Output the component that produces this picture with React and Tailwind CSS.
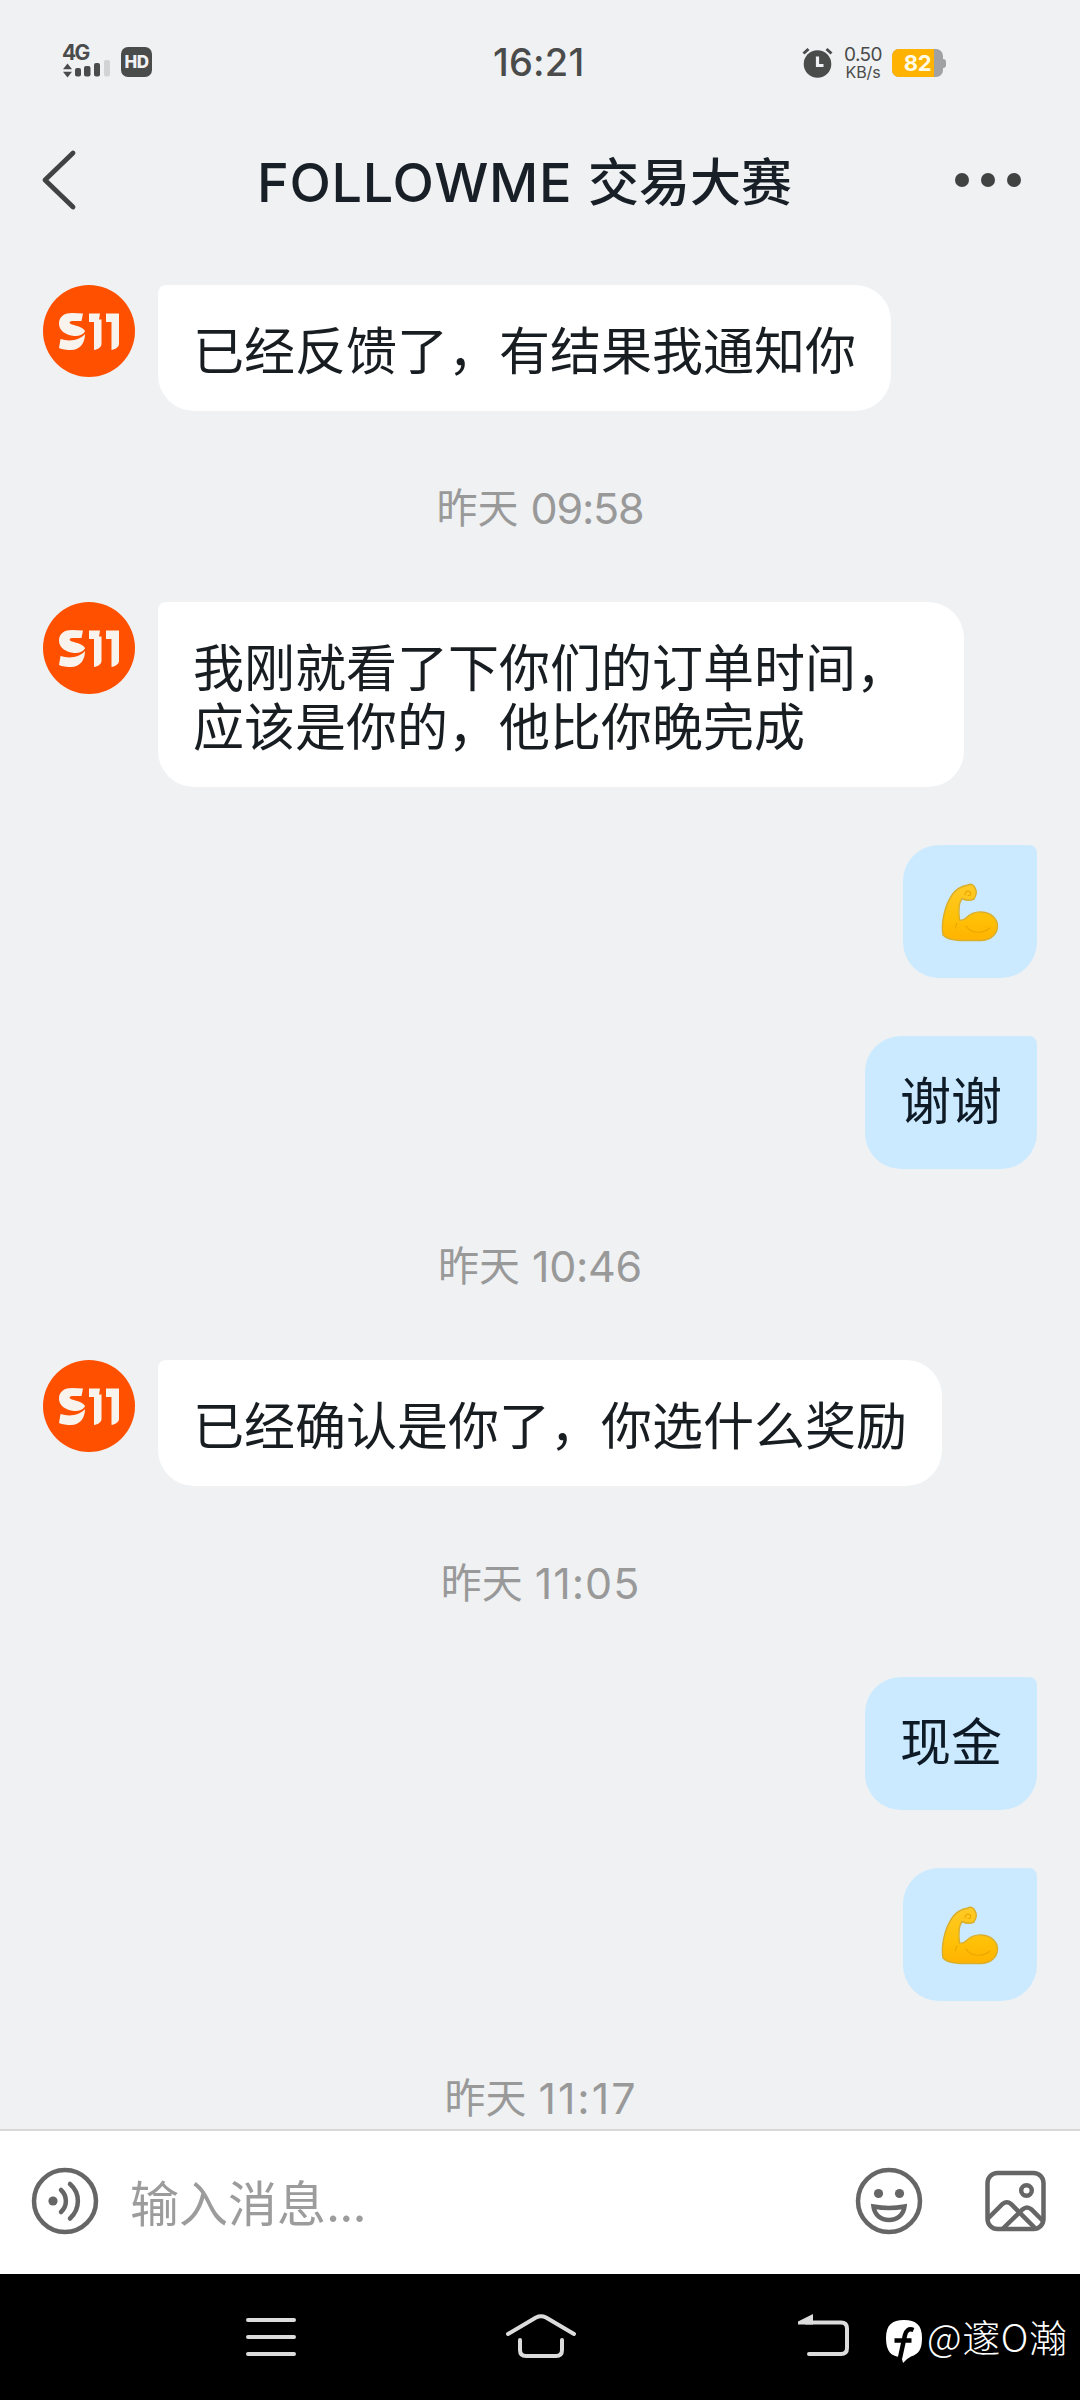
const messages = [
    { type: 'in', lines: ['已经反馈了，有结果我通知你'] },
    { type: 'time', day: '昨天', time: '09:58', spacing: 'tracking-[-1.2px]' },
    { type: 'in', lines: ['我刚就看了下你们的订单时间，', '应该是你的，他比你晚完成'] },
    { type: 'gap' },
    { type: 'emoji' },
    { type: 'gap' },
    { type: 'out', text: '谢谢' },
    { type: 'time', day: '昨天', time: '10:46', spacing: 'tracking-[-0.3px]' },
    { type: 'in', lines: ['已经确认是你了，你选什么奖励'] },
    { type: 'time', day: '昨天', time: '11:05', spacing: 'tracking-[1px] -mr-px' },
    { type: 'out', text: '现金' },
    { type: 'gap' },
    { type: 'emoji' },
    { type: 'time', day: '昨天', time: '11:17', spacing: 'tracking-[2px] -mr-0.5' }
];

function StatusBar() {
    return (
        <div className="h-[124px] flex items-start relative text-[#4a4b4b]">
            {/* Signal */}
            <div className="ml-[62px] mt-[43px] w-12">
                <div className="text-[21px] leading-[20px] h-[19px] font-bold tracking-[-1.8px]">4G</div>
                <svg className="block overflow-visible" width="48" height="16" viewBox="0 0 48 16" fill="currentColor">
                    <path d="M1 7.3L5.5 1.5L10 7.3ZM1 9.8L5.5 15.5L10 9.8Z" />
                    <rect x="13" y="6" width="6" height="8.500" rx="2" />
                    <rect x="22" y="4" width="6.500" height="10.500" rx="2" />
                    <rect x="32" y="1" width="6" height="13.500" rx="2" />
                    <rect x="42" y="-2" width="6" height="16.500" rx="2" fill="#d2d3d4" />
                </svg>
            </div>
            <div className="ml-[11px] mt-[47px] w-[31px] h-[30px] rounded-[7px] bg-[#4a4b4b] text-[#eff1f3] text-[17px] leading-[30px] font-extrabold text-center tracking-[-0.5px]">HD</div>

            <div className="ml-[341px] mt-[40px] text-[38px] leading-[44px] font-medium tracking-[0.2px] w-[110px]">16:21</div>

            {/* Alarm, speed, battery */}
            <svg className="ml-[199px] mt-[47px]" width="31" height="31" viewBox="0 0 31 31" fill="none">
                <circle cx="15.500" cy="17" r="13.800" fill="currentColor" />
                <path d="M1.500 6.500L6.500 2M29.500 6.500L24.500 2" stroke="currentColor" strokeWidth="3" />
                <path d="M15.500 9.500V18.500H21.500" stroke="#eff1f3" strokeWidth="3.200" />
            </svg>
            <div className="ml-[9px] mt-[45px] w-[42px] text-center">
                <div className="text-[19px] leading-[19px] tracking-[-0.6px]">0.50</div>
                <div className="text-[16px] leading-[16px] tracking-[-0.1px]">KB/s</div>
            </div>
            <div className="ml-[8px] mt-[49px] flex items-center">
                <div className="w-[51px] h-[28px] rounded-[7px] bg-[#a0a1a3] overflow-hidden">
                    <div className="w-[42px] h-full bg-[#ffb300] text-[#fffbe6] text-[22px] leading-[29px] font-bold text-right pr-[3px] tracking-[-0.5px]">82</div>
                </div>
                <div className="w-[3px] h-[9px] rounded-r-[3px] bg-[#a0a1a3]" />
            </div>
        </div>
    );
}

function Header() {
    return (
        <div className="h-[161px] flex items-start text-[#181f26]">
            <svg className="ml-[40px] mt-[25px]" width="38" height="62" viewBox="0 0 38 62" fill="none">
                <path d="M33 4L5 31L33 58" stroke="#414242" strokeWidth="4.800" strokeLinecap="round" strokeLinejoin="round" />
            </svg>
            <div className="flex-1 ml-[179px] mt-[26px] text-[54px] leading-[66px] font-medium whitespace-nowrap flex">
                <span className="w-[316px] tracking-[0.7px]">FOLLOWME</span>
                <span className="ml-[15px] text-[51px]">交易大赛</span>
            </div>
            <div className="flex gap-3 mt-[49px] mr-[59px]">
                <span className="w-[14px] h-[14px] rounded-full bg-[#414242]" />
                <span className="w-[14px] h-[14px] rounded-full bg-[#414242]" />
                <span className="w-[14px] h-[14px] rounded-full bg-[#414242]" />
            </div>
        </div>
    );
}

function Avatar() {
    return (
        <svg className="ml-[43px] mr-[23px] flex-none" width="92" height="92" viewBox="0 0 92 92">
            <circle cx="46" cy="46" r="46" fill="#ff5000" />
            <g fill="#f9f3ee">
                <path d="M40 28.500L38.500 36H30C26 36 25.500 38.500 29 39.500C34 41 41 42.500 42 46.500C39 50.500 35 51.500 31 51C23 50 16 46 16 38.500C16 31 22 28 29 28Z" />
                <path d="M17.500 54C27 57 37 55 42 49C42 58 37 65 28 65C24 65 19 64.500 16 63Z" />
                <path d="M46 28.500H57L56 34.500H58.500V59C58.500 62 55 64.500 51 65V37H46Z" />
                <path d="M63 28.500H76V59C76 62 72 64.500 68.500 65V37H63Z" />
            </g>
        </svg>
    );
}

function Muscle() {
    return (
        <svg width="60" height="60" viewBox="0 0 60 60" fill="none">
            <defs>
                <linearGradient id="skin" x1="0" y1="0" x2="0" y2="1">
                    <stop offset="0" stopColor="#ffca28" />
                    <stop offset="0.600" stopColor="#ffc107" />
                    <stop offset="1" stopColor="#ffb300" />
                </linearGradient>
            </defs>
            <path d="M28 3C31 1.500 34 2.500 35 6C37 9 36.500 13 34 17C30 19 25 18 22 16.500C18 22 18.500 30 19.500 38C22 38.500 24 38 26 36C30 32 36 29.500 42 30C51 30.500 57.500 37 57.500 44C57.500 52 51 58 42 58.500H20C12 58 6 56.500 3 53C1 42 4 25 12 13C16 7 22 4 28 3Z" fill="url(#skin)" stroke="#d9ae2c" strokeWidth="1.400" />
            <path d="M25 13C25 10 27 8.500 29.500 9.500C31.500 10.500 31 14 28 13.500M17 41C16 43 15.500 44.500 15.500 46M26 44C31 52 43 52 50 46" stroke="#eda600" strokeWidth="1.100" strokeLinecap="round" />
        </svg>
    );
}

function Message({ item }) {
    if (item.type === 'gap') return <div className="h-[58px]" />;

    if (item.type === 'time') {
        return (
            <div className="h-[191px] pt-[3px] flex items-center justify-center text-[#999]  whitespace-nowrap">
                <span className="text-[41px] leading-[60px]">{item.day}</span>
                <span className={`ml-3 text-[43px] leading-[60px] ${item.spacing}`}>{item.time}</span>
            </div>
        );
    }

    if (item.type === 'in') {
        return (
            <div className="flex items-start">
                <Avatar />
                <div className={`px-[35px] pt-[37px] pb-[30px] bg-white rounded-[36px] rounded-tl-[8px] ${item.lines.length > 1 ? 'w-[806px]' : ''}`}>
                    {item.lines.map(line => (
                        <p key={line} className="text-[51px] leading-[59px] whitespace-nowrap text-[#181d22]">{line}</p>
                    ))}
                </div>
            </div>
        );
    }

    return (
        <div className="flex justify-end pr-[43px]">
            <div className="h-[133px] px-[35px] flex items-center bg-[#cbeaff] rounded-[36px] rounded-tr-[8px]">
                {item.type === 'emoji' ? (
                    <div className="w-[64px] flex justify-center"><Muscle /></div>
                ) : (
                    <p className="text-[51px] leading-[59px] pb-[2px] text-[#0e1a26]">{item.text}</p>
                )}
            </div>
        </div>
    );
}

function InputBar() {
    return (
        <div className="h-[145px] flex-none flex items-center bg-white border-t-2 border-[#d8d8d9] text-[#666]">
            <svg className="ml-[31px] mb-1" width="68" height="68" viewBox="0 0 68 68" fill="none" stroke="currentColor" strokeWidth="4.500" strokeLinecap="round">
                <circle cx="34" cy="34" r="31" />
                <circle cx="22" cy="34" r="4.600" fill="currentColor" stroke="none" />
                <path d="M30 23C36.500 29 36.500 39 30 45" />
                <path d="M39 17C49.500 26 49.500 42 39 51.500" />
            </svg>
            <div className="ml-[31px] pt-[5px] flex-1 text-[49px] leading-[60px] text-[#9c9c9c]">
                输入消息<span className="tracking-[-0.9px]">...</span>
            </div>
            <svg className="mr-[62px] mb-1" width="68" height="68" viewBox="0 0 68 68" fill="none" stroke="currentColor" strokeWidth="4.500">
                <circle cx="34" cy="34" r="31" />
                <circle cx="23.500" cy="26.500" r="4.600" fill="currentColor" stroke="none" />
                <circle cx="44.500" cy="26.500" r="4.600" fill="currentColor" stroke="none" />
                <path d="M18.500 39.500Q34 42.500 49.500 39.500C48.500 48 42 53 34 53C26 53 19.500 48 18.500 39.500Z" />
            </svg>
            <svg className="mr-[33px] mb-1" width="62" height="62" viewBox="0 0 62 62" fill="none" stroke="currentColor" strokeWidth="4.500">
                <rect x="2.500" y="3" width="56" height="56" rx="10" />
                <circle cx="41.500" cy="20.500" r="5.300" />
                <path d="M3 48.500L17.500 34Q22 30.500 26 34L50 58" />
                <path d="M18 58.500L37.500 39.500Q42 35.500 46.500 39.500L58 51" />
            </svg>
        </div>
    );
}

function NavBar() {
    return (
        <div className="relative h-[126px] flex-none flex items-start bg-black text-[#dcdcdc]">
            <svg className="ml-[244px] mt-[42px]" width="54" height="42" viewBox="0 0 54 42" fill="none" stroke="currentColor" strokeWidth="4" strokeLinecap="round">
                <path d="M4 4H50M4 21H50M4 38H50" />
            </svg>
            <svg className="ml-[206px] mt-[38px]" width="74" height="50" viewBox="0 0 74 50" fill="none" stroke="currentColor" strokeWidth="4" strokeLinecap="round" strokeLinejoin="round">
                <path d="M4 22L32 5.500Q37 3 42 5.500L70 22" />
                <path d="M16 28V38Q16 44 22 44H52Q58 44 58 38V28" />
            </svg>
            <svg className="ml-[218px] mt-[38px]" width="56" height="50" viewBox="0 0 56 50" fill="none" stroke="currentColor" strokeWidth="4" strokeLinecap="round">
                <path d="M10 10.500H45Q51 10.500 51 16.500V36Q51 42 45 42H13" />
                <path d="M2 9.500L17 2V12.500H2Z" fill="currentColor" stroke="none" />
            </svg>
            {/* Author mark */}
            <div className="absolute left-[885px] top-[41px] flex items-start text-white">
                <svg width="38" height="50" viewBox="0 0 38 50">
                    <path d="M19 5C31 5 37 10 37 23C37 34 34 39 26 41.500Q21 44 18 48L16.500 42C6 42 1 36 1 23C1 10 7 5 19 5Z" fill="#fff" />
                    <path d="M28.500 15C23.500 13 21 16 20 20L15 43M9.500 25.500H26.500" fill="none" stroke="#000" strokeWidth="4.500" />
                </svg>
                <span className="ml-[4px] -mt-px font-['Noto_Sans_CJK_SC',sans-serif] font-light text-[38px] leading-[44px] tracking-[0.6px] whitespace-nowrap">@邃O瀚</span>
            </div>
        </div>
    );
}

export default function App() {
    return (
        <div className="w-[1080px] h-[2400px] flex flex-col overflow-hidden bg-[#eff1f3] font-[Inter,'Noto_Sans_CJK_SC',sans-serif]">
            <StatusBar />
            <Header />
            <div className="flex-1 min-h-0 overflow-hidden">
                {messages.map((item, i) => (
                    <Message key={i} item={item} />
                ))}
            </div>
            <InputBar />
            <NavBar />
        </div>
    );
}
